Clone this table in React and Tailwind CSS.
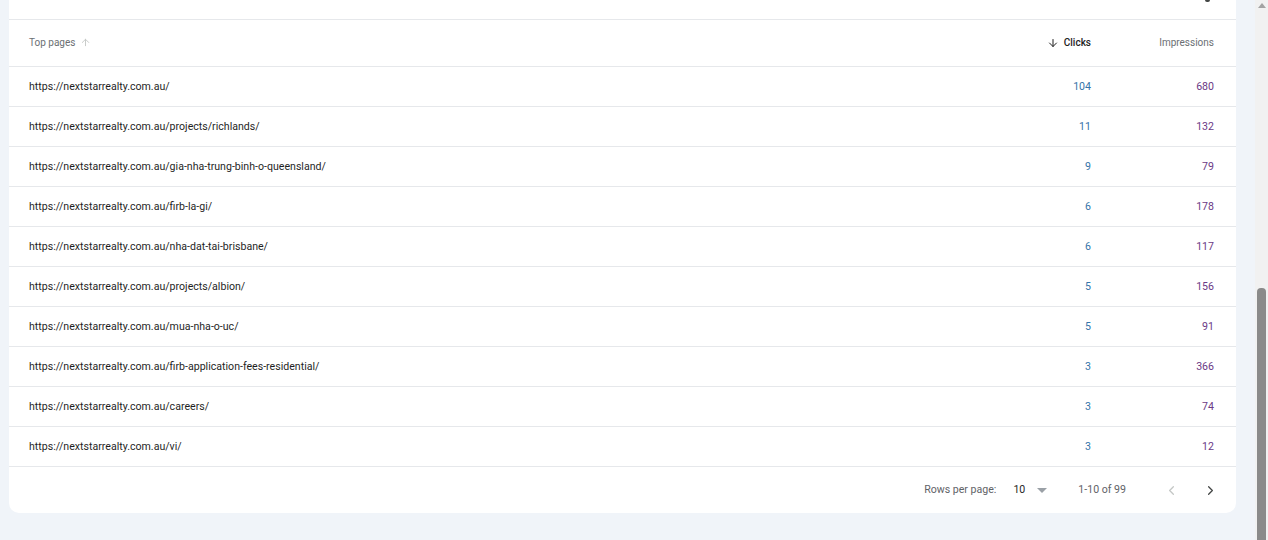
import React from 'react';
import { ArrowDown, ArrowUp, ChevronLeft, ChevronRight } from 'lucide-react';

const rows = [
  { url: 'https://nextstarrealty.com.au/', clicks: 104, impressions: 680 },
  { url: 'https://nextstarrealty.com.au/projects/richlands/', clicks: 11, impressions: 132 },
  { url: 'https://nextstarrealty.com.au/gia-nha-trung-binh-o-queensland/', clicks: 9, impressions: 79 },
  { url: 'https://nextstarrealty.com.au/firb-la-gi/', clicks: 6, impressions: 178 },
  { url: 'https://nextstarrealty.com.au/nha-dat-tai-brisbane/', clicks: 6, impressions: 117 },
  { url: 'https://nextstarrealty.com.au/projects/albion/', clicks: 5, impressions: 156 },
  { url: 'https://nextstarrealty.com.au/mua-nha-o-uc/', clicks: 5, impressions: 91 },
  { url: 'https://nextstarrealty.com.au/firb-application-fees-residential/', clicks: 3, impressions: 366 },
  { url: 'https://nextstarrealty.com.au/careers/', clicks: 3, impressions: 74 },
  { url: 'https://nextstarrealty.com.au/vi/', clicks: 3, impressions: 12 },
];

export default function App() {
  return (
    <div
      className="flex h-[540px] w-[1268px] overflow-hidden bg-[#f0f4f9]"
      style={{ fontFamily: 'Roboto, "Liberation Sans", sans-serif' }}
    >
      <div className="flex-1 pl-[9px] pr-[19px]">
        <div className="flex flex-col overflow-hidden rounded-b-[10px] bg-white">
          {/* top strip, cut off */}
          <div className="relative h-[20px] border-b border-[#e6e8eb]">
            <div className="absolute right-[26px] top-0 h-[2px] w-[5px] rounded-b-full bg-[#444746]" />
          </div>

          {/* header */}
          <div className="flex h-[47px] items-center border-b border-[#e6e8eb] pb-[1px] pl-[20px] pr-[22px] text-[10px] text-[#6b6f73]">
            <div className="flex flex-1 items-center gap-[5px]">
              <span>Top pages</span>
              <ArrowUp className="h-[11px] w-[11px] text-[#c4c7c5]" strokeWidth={2} />
            </div>
            <div className="flex w-[100px] items-center justify-end gap-[5px] text-[#1f1f1f]">
              <ArrowDown className="h-[12px] w-[12px]" strokeWidth={2} />
              <span className="font-medium">Clicks</span>
            </div>
            <div className="w-[123px] text-right">Impressions</div>
          </div>

          {/* rows */}
          {rows.map((r) => (
            <div
              key={r.url}
              className="flex h-[40px] items-center border-b border-[#e6e8eb] pl-[20px] pr-[22px] text-[10.6px]"
            >
              <div className="flex-1 text-[#1f1f1f]">{r.url}</div>
              <div className="w-[100px] text-right text-[#3574a8]">{r.clicks}</div>
              <div className="w-[123px] text-right text-[#6b3a86]">{r.impressions}</div>
            </div>
          ))}

          {/* footer */}
          <div className="flex h-[46px] items-center justify-end pr-[18px] text-[10.6px] text-[#5f6368]">
            <span>Rows per page:</span>
            <span className="ml-[17px] text-[#1f1f1f]">10</span>
            <span className="ml-[12px] h-0 w-0 border-x-[5px] border-t-[5px] border-x-transparent border-t-[#9aa0a6]" />
            <span className="ml-[31px]">1-10 of 99</span>
            <ChevronLeft className="ml-[38px] h-[15px] w-[15px] text-[#c4c7c5]" strokeWidth={2} />
            <ChevronRight className="ml-[24px] h-[15px] w-[15px] text-[#444746]" strokeWidth={2} />
          </div>
        </div>
      </div>

      {/* scrollbar */}
      <div className="flex w-[13px] flex-col items-center bg-[#f1f1f1]">
        <div className="mt-[3px] h-0 w-0 border-x-[4px] border-b-[5px] border-x-transparent border-b-[#a3a3a3]" />
        <div className="mt-[280px] w-[9px] flex-1 rounded-t-[4px] bg-[#8a8a8a]" />
      </div>
    </div>
  );
}
